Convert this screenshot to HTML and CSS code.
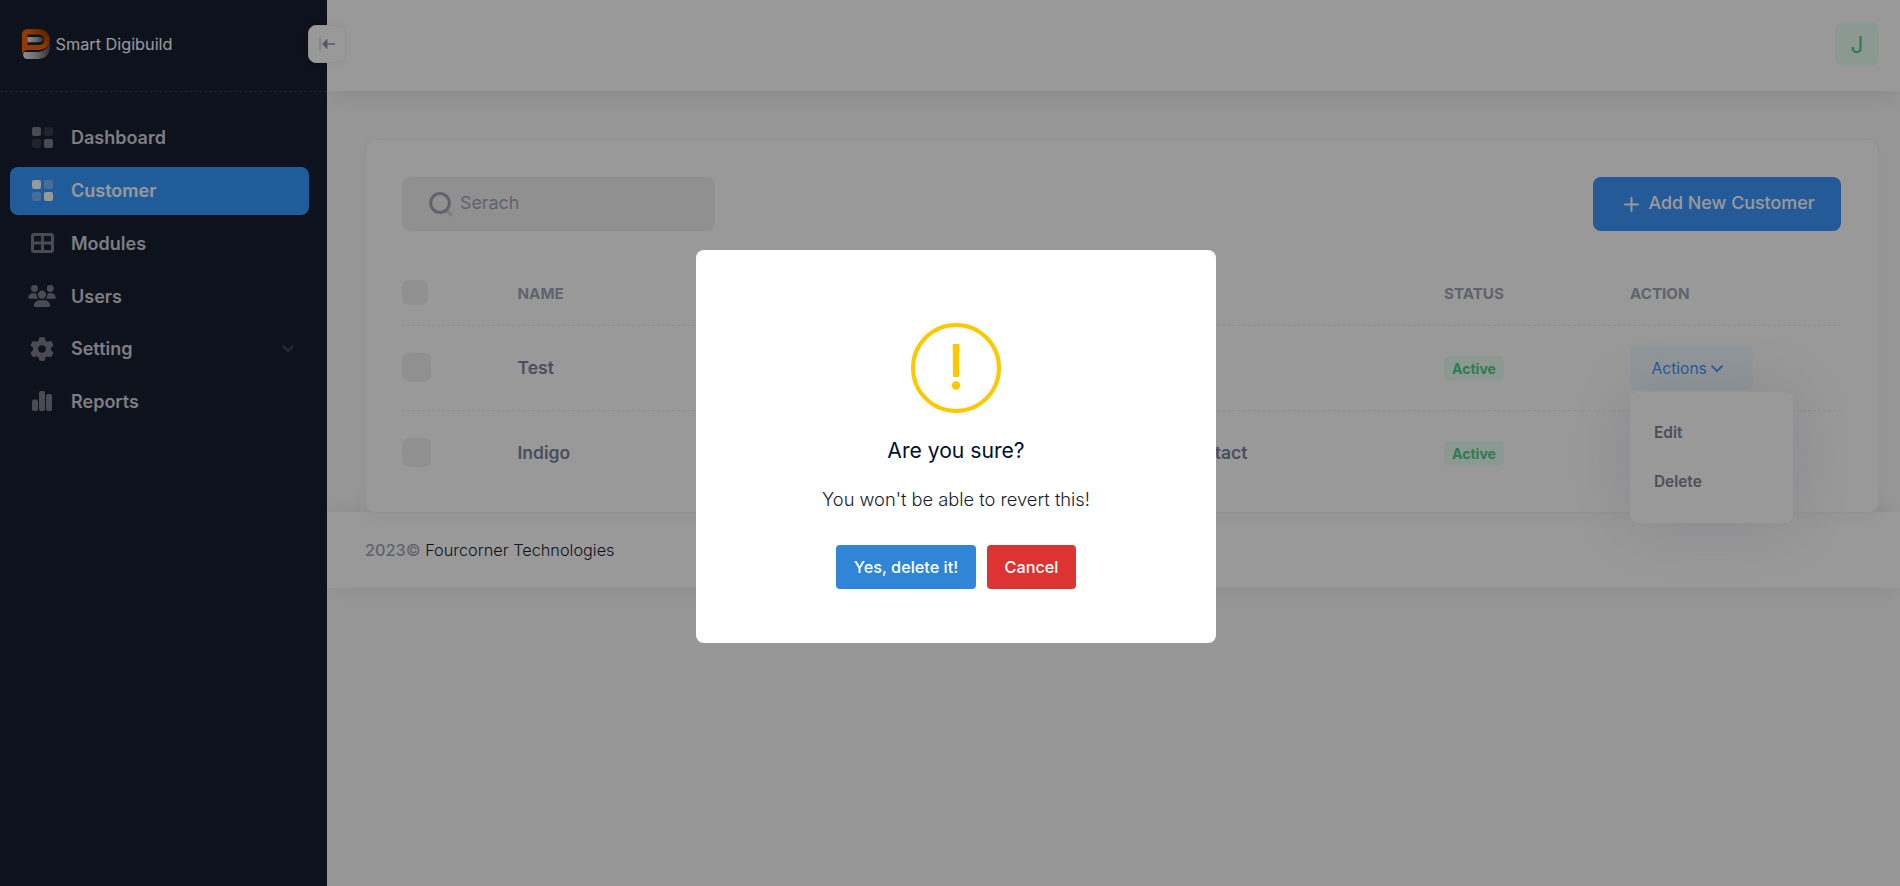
FILE: index.html
```
<!DOCTYPE html>
<html lang="en">
<head>
<meta charset="utf-8">
<title>Smart Digibuild</title>
<link rel="stylesheet" href="styles.css">
</head>
<body>
<div class="app">
  <aside class="sidebar">
    <div class="brand">
      <svg class="brand-logo" width="28" height="30" viewBox="0 0 28 30">
        <defs>
          <linearGradient id="steel" x1="0" x2="1"><stop offset="0" stop-color="#eee"/><stop offset=".55" stop-color="#aaa"/><stop offset="1" stop-color="#555"/></linearGradient>
          <linearGradient id="flame" x1="0" y1="1" x2="1" y2="0"><stop offset="0.55" stop-color="#f06400"/><stop offset="1" stop-color="#7a2800"/></linearGradient>
        </defs>
        <path d="M28 13v6q-1 10-11 11H5q-3 0-4-4l1-3h15q8-1 11-10z" fill="url(#steel)"/>
        <path d="M5 0h13q9 1 10 10.500-1 9-10 10.500H5q-4 1-5 5V5q0-4 5-5z" fill="url(#flame)"/>
        <path d="M5.500 5.500H17q3.500 0 5 3.500v4q-1.500 3-5 3H5.500z" fill="#171e31"/>
        <path d="M5.500 8H18q3 .5 3.500 2.500-.5 2.500-3.500 2.800H5.500z" fill="url(#steel)"/>
      </svg>
      <span>Smart Digibuild</span>
      <button class="toggle" aria-label="Collapse">
        <svg width="18" height="14" viewBox="0 0 18 14"><path d="M2 .5v13" stroke="#d5d9e6" stroke-width="1.800"/><path d="M9 2.500v9L4.500 7z" fill="#8c95ad" stroke="#8c95ad" stroke-linejoin="round"/><path d="M8 7h8.500" stroke="#8c95ad" stroke-width="1.700" stroke-linecap="round"/></svg>
      </button>
    </div>
    <nav class="menu">
      <a class="item"><span class="icon"><svg width="21" height="21" viewBox="0 0 21 21"><g class="strong"><rect width="9" height="9" rx="2"/><rect x="12" y="12" width="9" height="9" rx="2"/></g><g class="faint"><rect x="12" width="9" height="9" rx="2"/><rect y="12" width="9" height="9" rx="2"/></g></svg></span>Dashboard</a>
      <a class="item active"><span class="icon"><svg width="21" height="21" viewBox="0 0 21 21"><g class="strong"><rect width="9" height="9" rx="2"/><rect x="12" y="12" width="9" height="9" rx="2"/></g><g class="faint"><rect x="12" width="9" height="9" rx="2"/><rect y="12" width="9" height="9" rx="2"/></g></svg></span>Customer</a>
      <a class="item"><span class="icon"><svg width="23" height="20" viewBox="0 0 23 20"><path fill-rule="evenodd" d="M3 0h17a3 3 0 0 1 3 3v14a3 3 0 0 1-3 3H3a3 3 0 0 1-3-3V3a3 3 0 0 1 3-3zM3 3v5.500h7V3zM13 3v5.500h7V3zM3 11.500V17h7v-5.500zM13 11.500V17h7v-5.500z"/></svg></span>Modules</a>
      <a class="item"><span class="icon"><svg width="28" height="22" viewBox="0 0 640 512"><path d="M144 0a80 80 0 1 1 0 160A80 80 0 1 1 144 0zM512 0a80 80 0 1 1 0 160A80 80 0 1 1 512 0zM0 298.700C0 239.800 47.800 192 106.700 192h42.700c15.900 0 31 3.500 44.600 9.700c-1.300 7.200-1.900 14.700-1.900 22.300c0 38.200 16.800 72.500 43.300 96H21.300C9.600 320 0 310.400 0 298.700zM405.300 320h-.7c26.600-23.500 43.300-57.800 43.300-96c0-7.600-.7-15-1.900-22.300c13.600-6.300 28.700-9.700 44.600-9.700h42.700C592.200 192 640 239.800 640 298.700c0 11.800-9.600 21.300-21.300 21.300H405.300zM224 224a96 96 0 1 1 192 0 96 96 0 1 1-192 0zM128 485.300C128 411.700 187.700 352 261.300 352H378.700C452.300 352 512 411.700 512 485.300c0 14.700-11.900 26.700-26.700 26.700H154.700c-14.700 0-26.700-11.900-26.700-26.700z"/></svg></span>Users</a>
      <a class="item"><span class="icon gear"><svg width="24" height="24" viewBox="0 0 512 512"><path d="M495.900 166.600c3.200 8.700 .5 18.400-6.400 24.600l-43.300 39.400c1.100 8.300 1.700 16.800 1.700 25.400s-.6 17.100-1.700 25.400l43.300 39.400c6.900 6.200 9.600 15.900 6.400 24.600c-4.400 11.900-9.700 23.300-15.800 34.300l-4.700 8.100c-6.600 11-14 21.400-22.100 31.200c-5.900 7.200-15.700 9.600-24.500 6.800l-55.700-17.700c-13.400 10.300-28.200 18.900-44 25.400l-12.500 57.100c-2 9.100-9 16.300-18.200 17.800c-13.800 2.300-28 3.500-42.500 3.500s-28.700-1.200-42.500-3.500c-9.200-1.500-16.200-8.700-18.200-17.800l-12.500-57.100c-15.800-6.500-30.600-15.100-44-25.400L83.100 425.900c-8.800 2.800-18.600 .3-24.500-6.800c-8.100-9.800-15.500-20.200-22.100-31.200l-4.700-8.100c-6.100-11-11.400-22.400-15.800-34.300c-3.200-8.700-.5-18.400 6.400-24.600l43.300-39.400C64.600 273.100 64 264.600 64 256s.6-17.100 1.700-25.400L22.400 191.200c-6.900-6.200-9.600-15.900-6.400-24.600c4.400-11.900 9.700-23.300 15.800-34.300l4.700-8.100c6.600-11 14-21.400 22.100-31.200c5.900-7.200 15.700-9.600 24.500-6.800l55.700 17.700c13.400-10.300 28.200-18.900 44-25.400l12.500-57.100c2-9.100 9-16.300 18.200-17.800C227.300 1.200 241.500 0 256 0s28.700 1.200 42.500 3.500c9.200 1.500 16.200 8.700 18.200 17.800l12.500 57.100c15.800 6.500 30.600 15.100 44 25.400l55.700-17.700c8.800-2.800 18.600-.3 24.500 6.800c8.100 9.800 15.500 20.200 22.100 31.200l4.700 8.100c6.100 11 11.400 22.400 15.800 34.300zM256 336a80 80 0 1 0 0-160 80 80 0 1 0 0 160z"/></svg></span>Setting
        <svg class="caret" width="12" height="8" viewBox="0 0 12 8"><path d="M1.500 1.500 6 6l4.500-4.500"/></svg></a>
      <a class="item"><span class="icon"><svg width="20" height="20" viewBox="0 0 20 20"><rect y="8.500" width="6" height="11.500" rx="2"/><rect x="7" width="6" height="20" rx="2"/><rect x="14" y="3" width="6" height="17" rx="2"/></svg></span>Reports</a>
    </nav>
  </aside>
  <div class="page">
    <header class="topbar"><div class="avatar">J</div></header>
    <main class="content">
      <section class="card">
        <div class="card-head">
          <div class="search"><svg width="25" height="25" viewBox="0 0 25 25"><path d="M18.500 19.500l3.500 3" stroke="#d3d5de" stroke-width="4" stroke-linecap="round"/><circle cx="11" cy="11" r="9.400" fill="none" stroke="#a1a5b7" stroke-width="3"/></svg>Serach</div>
          <button class="add"><svg width="15" height="15" viewBox="0 0 15 15"><path d="M7.500 1v13M1 7.500h13" stroke="#fff" stroke-width="2" stroke-linecap="round"/></svg><span>Add New Customer</span></button>
        </div>
        <div class="table">
          <div class="row head"><span><i class="check small"></i></span><span>Name</span><span></span><span>Status</span><span>Action</span></div>
          <div class="row"><span><i class="check"></i></span><span>Test</span><span></span><span><b class="badge">Active</b></span>
            <span class="actions"><button class="drop">Actions <svg width="12" height="8" viewBox="0 0 12 8"><path d="M1 1.200 6 6.200l5-5"/></svg></button>
              <div class="dropdown"><a>Edit</a><a>Delete</a></div></span></div>
          <div class="row"><span><i class="check"></i></span><span>Indigo</span><span class="module">Contact</span><span><b class="badge">Active</b></span><span></span></div>
        </div>
      </section>
    </main>
    <footer class="footer"><span class="year">2023©</span><span>Fourcorner Technologies</span></footer>
  </div>
</div>
<div class="overlay">
  <div class="modal">
    <svg class="warn" width="90" height="90" viewBox="0 0 90 90"><circle cx="45" cy="45" r="43" fill="none" stroke="#ffc700" stroke-width="4"/><path d="M41.700 21h6.600l-.3 33h-6z" fill="#ffc700"/><circle cx="45" cy="62.500" r="4.200" fill="#ffc700"/></svg>
    <h2>Are you sure?</h2>
    <p>You won't be able to revert this!</p>
    <div class="buttons"><button class="yes">Yes, delete it!</button><button class="no">Cancel</button></div>
  </div>
</div>
</body>
</html>
```
FILE: styles.css
```
* { box-sizing: border-box; }
body { margin: 0; font-family: Inter, "Liberation Sans", sans-serif; font-size: 16.25px; color: #181c32; background: #fcfcfc; overflow: hidden; }
button { font: inherit; border: 0; padding: 0; margin: 0; }
svg { display: block; flex: none; }

.app { display: flex; height: 886px; }

/* Sidebar */
.sidebar { width: 327px; flex: none; background: #171e31; position: relative; z-index: 2; }
.brand { height: 92px; border-bottom: 1px dashed #393945; display: flex; align-items: center; padding: 0 0 3px 22px; gap: 5.500px; color: #fff; font-size: 16.25px; font-weight: 400; position: relative; }
.toggle { position: absolute; right: -19px; top: 25px; width: 38px; height: 38px; border-radius: 8px; background: #fff; border: 1px solid #f4f4f4; box-shadow: 0 0 12px rgba(0,0,0,.04); display: flex; align-items: center; justify-content: center; }
.menu { padding: 22px 18px 0 10px; display: flex; flex-direction: column; gap: 4.700px; }
.item { height: 48px; border-radius: 8px; display: flex; align-items: center; font-size: 18px; font-weight: 600; color: #d0d0da; fill: #7e7c8c; padding-right: 15px; }
.item:first-child { margin-top: -1px; margin-bottom: 1px; }
.icon { width: 64px; height: 100%; display: flex; align-items: center; justify-content: center; margin-right: -3px; }
.gear { padding-top: 1px; }
.faint { opacity: .3; }
.item.active { background: #3699ff; color: #fff; fill: #fff; }
.caret { margin-left: auto; fill: none; stroke: #474761; stroke-width: 2; stroke-linecap: round; stroke-linejoin: round; }

/* Page */
.page { flex: 1; min-width: 0; }
.topbar { height: 91px; background: #fff; display: flex; justify-content: flex-end; padding: 22px 21px 0 0; box-shadow: 0 8px 24px rgba(0,0,0,.08); }
.avatar { width: 44px; height: 44px; border-radius: 8px; background: #e8fff3; color: #50cd89; font-size: 22.750px; font-weight: 400; display: flex; align-items: center; justify-content: center; }
.content { padding: 48px 21px 0 38px; }
.card { height: 374px; margin-bottom: -1px; background: #fff; border: 1px solid #f3f3f3; border-radius: 10px; padding: 37px 37px 0 36px; position: relative; z-index: 1; box-shadow: 0 4px 18px rgba(0,0,0,.04); }
.card-head { display: flex; justify-content: space-between; }
.search { width: 313px; height: 54px; border-radius: 8px; background: #f1f1f2; color: #a1a5b7; font-size: 17.875px; font-weight: 400; display: flex; align-items: center; gap: 6px; padding: 0 0 3px 27px; }
.search svg { margin-top: 3px; }
.add { width: 248px; height: 54px; border-radius: 8px; background: #3e97ff; color: #fff; font-size: 17.875px; font-weight: 500; display: flex; align-items: center; gap: 10px; padding: 0 0 0 30.500px; }
.add span { padding-bottom: 3px; }
.table { margin-top: 29px; }
.row { display: grid; grid-template-columns: 115.500px 600.500px 326px 186px 1fr; align-items: center; height: 85px; padding-bottom: 1px; color: #7e8299; font-size: 17.500px; font-weight: 600; }
.row:not(:last-child) { border-bottom: 1px dashed #ededf0; }
.row:last-child { padding-bottom: 3px; }
.row.head { height: 66px; padding-bottom: 0; color: #a1a5b7; font-size: 15.200px; font-weight: 700; text-transform: uppercase; }
.row.head > :not(:first-child) { padding-top: 2px; }
.module { text-align: right; width: 129.500px; }
.check { display: block; width: 29px; height: 29px; border-radius: 7px; background: #f1f1f2; }
.check.small { width: 26px; height: 25px; }
.badge { display: flex; width: 60px; height: 25px; margin-top: 2px; border-radius: 6px; background: #e8fff3; color: #50cd89; font-size: 14px; font-weight: 700; align-items: center; justify-content: center; }
.actions { position: relative; }
.drop { width: 123px; height: 44px; border-radius: 6px; background: #f1faff; color: #3e97ff; font-size: 15.600px; font-weight: 400; display: flex; align-items: center; padding: 2px 0 0 21.500px; gap: 4px; }
.drop svg { fill: none; stroke: #3e97ff; stroke-width: 1.800; stroke-linecap: round; }
.dropdown { position: absolute; top: 46px; left: 0; width: 163px; height: 131px; border-radius: 8px; background: #fff; box-shadow: 0 0 60px rgba(82,63,105,.15); padding: 16px 24px; font-size: 15.400px; font-weight: 600; display: flex; flex-direction: column; }
.dropdown a { height: 49px; display: flex; align-items: center; }

.footer { height: 76px; background: #fff; box-shadow: 0 0 24px rgba(0,0,0,.09); display: flex; align-items: center; gap: 4.500px; padding-left: 38px; font-size: 16.300px; font-weight: 300; }
.year { color: #a1a5b7; font-weight: 500; }

/* Confirmation dialog */
.overlay { position: fixed; inset: 0; background: rgba(0,0,0,.4); z-index: 10; display: flex; align-items: flex-start; justify-content: center; padding: 250px 0 0 12px; }
.modal { width: 520px; height: 393px; background: #fff; border-radius: 8px; display: flex; flex-direction: column; align-items: center; padding-top: 73px; }
.modal h2 { margin: 25px 0 0; font-size: 21.125px; line-height: 26px; font-weight: 400; color: #00112f; }
.modal p { margin: 23px 0 0; font-size: 18.280px; line-height: 24px; font-weight: 300; }
.buttons { display: flex; gap: 11px; margin-top: 34px; }
.buttons button { height: 44px; border-radius: 4px; color: #fff; font-size: 16.250px; font-weight: 500; }
.yes { width: 140px; background: #3085d6; }
.no { width: 89px; background: #d33; }
```
